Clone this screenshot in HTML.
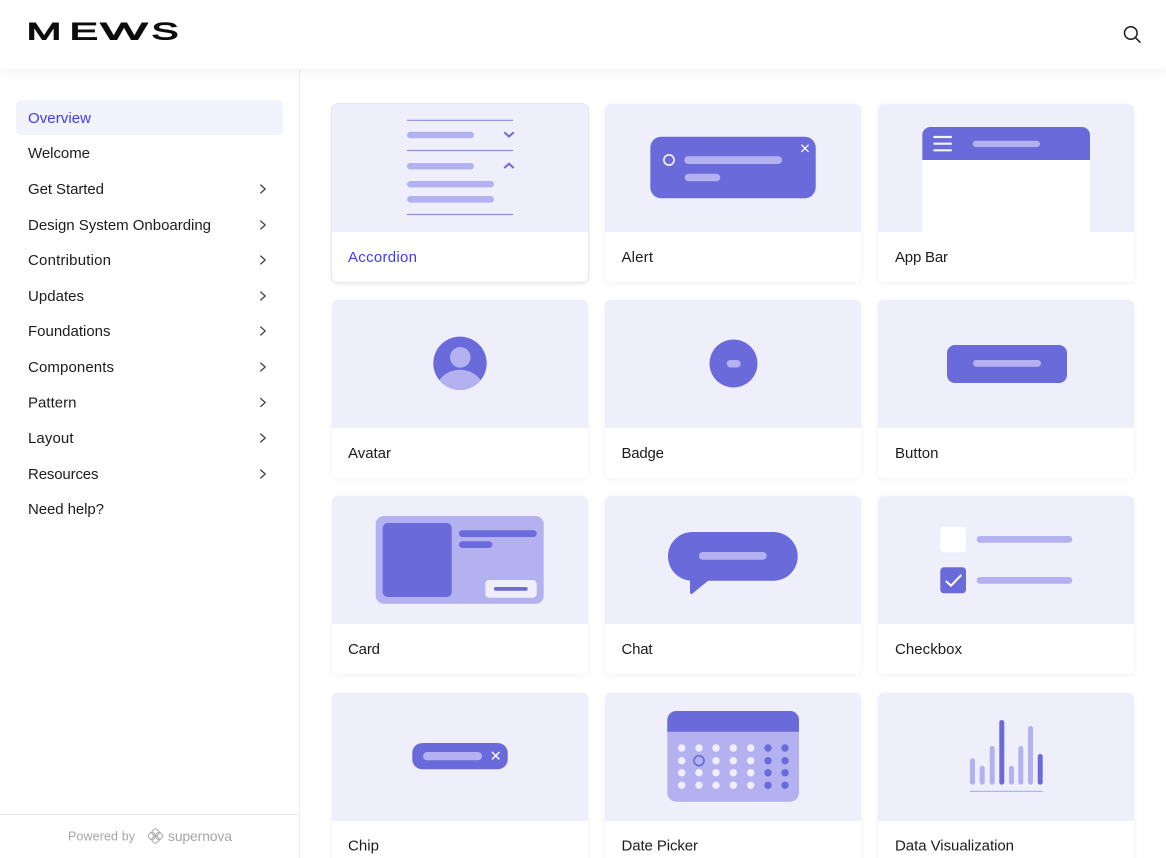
<!DOCTYPE html>
<html lang="en">
<head>
<meta charset="utf-8">
<title>Components</title>
<style>
html,body{margin:0;padding:0;background:#fff;width:1166px;height:858px;overflow:hidden}
body{position:relative;font-family:"Liberation Sans",sans-serif}
.hdr{position:absolute;left:0;top:0;width:1166px;height:69px;background:#fff;box-shadow:0 2px 12px rgba(0,0,0,.06);z-index:2}
.side{position:absolute;left:0;top:0;width:299px;height:858px;border-right:1px solid #ececec}
.active{position:absolute;left:16px;top:100px;width:267px;height:35px;border-radius:5px;background:#f3f3fd}
.foot{position:absolute;left:0;top:814px;width:299px;height:1px;background:#e8e8e8}
.card{position:absolute;width:255.700px;height:178px;border-radius:6px;background:#fff;overflow:hidden;box-shadow:0 1px 7px rgba(0,0,0,.06)}
.card i{display:block;height:128px;background:#efeffc}
.card.on{box-shadow:0 0 0 1px #e6e6e6,0 2px 6px rgba(0,0,0,.09)}
svg{position:absolute;left:0;top:0;z-index:3}
text{font-family:"Liberation Sans",sans-serif;font-size:15px;fill:#1c1c1c}
.l{font-size:24.500px;fill:#0c0c0c;stroke:#0c0c0c;stroke-width:1px}
.f{font-size:12.500px;fill:#a6a6a6}
</style>
</head>
<body>
<div class="side"><div class="active"></div><div class="foot"></div></div>
<div class="hdr"></div>

<div class="card on" style="left:332px;top:104px"><i></i></div>
<div class="card" style="left:605.300px;top:104px"><i></i></div>
<div class="card" style="left:878.300px;top:104px"><i></i></div>
<div class="card" style="left:332px;top:300px"><i></i></div>
<div class="card" style="left:605.300px;top:300px"><i></i></div>
<div class="card" style="left:878.300px;top:300px"><i></i></div>
<div class="card" style="left:332px;top:496px"><i></i></div>
<div class="card" style="left:605.300px;top:496px"><i></i></div>
<div class="card" style="left:878.300px;top:496px"><i></i></div>
<div class="card" style="left:332px;top:692.700px"><i></i></div>
<div class="card" style="left:605.300px;top:692.700px"><i></i></div>
<div class="card" style="left:878.300px;top:692.700px"><i></i></div>

<svg width="1166" height="858" viewBox="0 0 1166 858" xmlns="http://www.w3.org/2000/svg">
<defs><clipPath id="av"><circle cx="460" cy="363.300" r="26.700"/></clipPath></defs>

<!-- logo -->
<text class="l" x="26.500" y="39.500" textLength="35" lengthAdjust="spacingAndGlyphs">M</text>
<text class="l" x="69.500" y="39.500" textLength="28.500" lengthAdjust="spacingAndGlyphs">E</text>
<text class="l" x="100.500" y="39.500" textLength="47" lengthAdjust="spacingAndGlyphs">W</text>
<text class="l" x="151.500" y="39.500" textLength="27" lengthAdjust="spacingAndGlyphs">S</text>

<!-- search -->
<circle cx="1130.800" cy="33" r="6.300" fill="none" stroke="#1a1a1a" stroke-width="1.500"/>
<path d="M1135.400 37.600L1140 42.200" fill="none" stroke="#1a1a1a" stroke-width="1.500" stroke-linecap="round"/>

<!-- nav -->
<text x="28" y="123" textLength="63" style="fill:#3f3cf0">Overview</text>
<text x="28" y="158" textLength="62">Welcome</text>
<text x="28" y="194" textLength="76">Get Started</text>
<text x="28" y="230" textLength="183">Design System Onboarding</text>
<text x="28" y="265" textLength="83">Contribution</text>
<text x="28" y="301" textLength="56">Updates</text>
<text x="28" y="336" textLength="82.500">Foundations</text>
<text x="28" y="372" textLength="86">Components</text>
<text x="28" y="407.500" textLength="48.500">Pattern</text>
<text x="28" y="443" textLength="45.500">Layout</text>
<text x="28" y="479" textLength="70.500">Resources</text>
<text x="28" y="514" textLength="76">Need help?</text>

<g fill="none" stroke="#444" stroke-width="1.300" stroke-linecap="round" stroke-linejoin="round">
<path d="M260.700 185l4.500 4-4.500 4"/>
<path d="M260.700 221l4.500 4-4.500 4"/>
<path d="M260.700 256l4.500 4-4.500 4"/>
<path d="M260.700 292l4.500 4-4.500 4"/>
<path d="M260.700 327l4.500 4-4.500 4"/>
<path d="M260.700 363l4.500 4-4.500 4"/>
<path d="M260.700 398.500l4.500 4-4.500 4"/>
<path d="M260.700 434l4.500 4-4.500 4"/>
<path d="M260.700 470l4.500 4-4.500 4"/>
</g>

<!-- footer -->
<text class="f" x="68" y="840.500" textLength="67">Powered by</text>
<g fill="none" stroke="#a6a6a6" stroke-width="1">
<rect x="152.200" y="829.200" width="6.600" height="6.600" rx="2.200" transform="rotate(45 155.500 832.500)"/>
<rect x="152.200" y="836.200" width="6.600" height="6.600" rx="2.200" transform="rotate(45 155.500 839.500)"/>
<rect x="148.700" y="832.700" width="6.600" height="6.600" rx="2.200" transform="rotate(45 152 836)"/>
<rect x="155.700" y="832.700" width="6.600" height="6.600" rx="2.200" transform="rotate(45 159 836)"/>
</g>
<text class="f" x="168" y="841" textLength="64" style="font-size:14px">supernova</text>

<!-- accordion -->
<path d="M407 120.300H513M407 150.500H513M407 214.500H513" stroke="#8f8de4" stroke-width="1.200"/>
<g fill="#b3b1f0">
<rect x="407" y="131.700" width="67" height="6.600" rx="3.300"/>
<rect x="407" y="163" width="67" height="6.400" rx="3.200"/>
<rect x="407" y="181" width="87" height="6.400" rx="3.200"/>
<rect x="407" y="196" width="87" height="6.600" rx="3.300"/>
</g>
<g fill="none" stroke="#6a6ada" stroke-width="2">
<path d="M504.300 132.300l4.700 4.200 4.700-4.200"/>
<path d="M504.300 168l4.700-4.300 4.700 4.300"/>
</g>

<!-- alert -->
<rect x="650.300" y="136.700" width="165.400" height="61.600" rx="11" fill="#6a6ada"/>
<circle cx="669" cy="160" r="5.100" fill="none" stroke="#efeffc" stroke-width="1.700"/>
<rect x="684.300" y="156.300" width="97.700" height="7.700" rx="3.800" fill="#b3b1f0"/>
<rect x="684.700" y="173.700" width="35.600" height="7.600" rx="3.800" fill="#b3b1f0"/>
<path d="M801.400 144.700l7.200 7.200M808.600 144.700l-7.200 7.200" stroke="#fff" stroke-width="1.300" fill="none"/>

<!-- app bar -->
<path d="M922.300 232V160H1090V232Z" fill="#fff"/>
<path d="M922.300 160V135a8 8 0 0 1 8-8H1082a8 8 0 0 1 8 8V160Z" fill="#6a6ada"/>
<path d="M934.300 137H951M934.300 143.700H951M934.300 150.300H951" stroke="#f4f4ff" stroke-width="2.200" stroke-linecap="round"/>
<rect x="972.700" y="140.700" width="67.300" height="6.400" rx="3.200" fill="#b3b1f0"/>

<!-- avatar -->
<circle cx="460" cy="363.300" r="26.700" fill="#6a6ada"/>
<circle cx="460.300" cy="357.300" r="10.300" fill="#b3b1f0"/>
<circle cx="460" cy="395.700" r="26" fill="#b3b1f0" clip-path="url(#av)"/>

<!-- badge -->
<circle cx="733.500" cy="363.500" r="24" fill="#6a6ada"/>
<rect x="726.700" y="360" width="14" height="7.500" rx="3.700" fill="#b3b1f0"/>

<!-- button -->
<rect x="947" y="345" width="120" height="38" rx="8" fill="#6a6ada"/>
<rect x="973" y="360" width="68" height="6.700" rx="3.300" fill="#b3b1f0"/>

<!-- card -->
<rect x="375.700" y="516" width="168" height="87.700" rx="8" fill="#b3b1f0"/>
<rect x="382.700" y="523" width="69" height="74" rx="5" fill="#6a6ada"/>
<rect x="459" y="530.300" width="77.700" height="6.700" rx="3.300" fill="#6a6ada"/>
<rect x="459" y="541.300" width="33.300" height="6.700" rx="3.300" fill="#6a6ada"/>
<rect x="485.300" y="580" width="51.400" height="17.700" rx="4" fill="#efeffc"/>
<rect x="494" y="587" width="33.700" height="3.700" rx="1.800" fill="#6a6ada"/>

<!-- chat -->
<rect x="668" y="532" width="129.700" height="48.700" rx="24.300" fill="#6a6ada"/>
<path d="M690 578V592.500a1.500 1.500 0 0 0 2.500 1.100L708 580.700V578Z" fill="#6a6ada"/>
<rect x="699" y="552" width="67.700" height="7.700" rx="3.800" fill="#b3b1f0"/>

<!-- checkbox -->
<rect x="940.300" y="527" width="25.700" height="25.300" rx="3.500" fill="#fff"/>
<rect x="940.300" y="567.300" width="25.700" height="26" rx="3.500" fill="#6a6ada"/>
<path d="M945.900 581L951 585.700L961.300 575" fill="none" stroke="#fff" stroke-width="2"/>
<rect x="976.700" y="536" width="95.600" height="6.700" rx="3.300" fill="#b3b1f0"/>
<rect x="976.700" y="577" width="95.600" height="6.700" rx="3.300" fill="#b3b1f0"/>

<!-- chip -->
<rect x="412.300" y="743" width="95.400" height="26.300" rx="10" fill="#6a6ada"/>
<rect x="423" y="752" width="59" height="8.300" rx="4.100" fill="#b3b1f0"/>
<path d="M492 752l7.400 7.400M499.400 752l-7.400 7.400" stroke="#fff" stroke-width="1.400" fill="none"/>

<!-- date picker -->
<rect x="667.300" y="711" width="131.700" height="90.700" rx="9" fill="#b3b1f0"/>
<path d="M667.300 731.700V720a9 9 0 0 1 9-9H790a9 9 0 0 1 9 9V731.700Z" fill="#6a6ada"/>
<g fill="#efeffc">
<circle cx="681.700" cy="748" r="3.700"/><circle cx="699" cy="748" r="3.700"/><circle cx="716" cy="748" r="3.700"/><circle cx="733.300" cy="748" r="3.700"/><circle cx="750.700" cy="748" r="3.700"/>
<circle cx="681.700" cy="760.700" r="3.700"/><circle cx="716" cy="760.700" r="3.700"/><circle cx="733.300" cy="760.700" r="3.700"/><circle cx="750.700" cy="760.700" r="3.700"/>
<circle cx="681.700" cy="772.700" r="3.700"/><circle cx="699" cy="772.700" r="3.700"/><circle cx="716" cy="772.700" r="3.700"/><circle cx="733.300" cy="772.700" r="3.700"/><circle cx="750.700" cy="772.700" r="3.700"/>
<circle cx="681.700" cy="785.300" r="3.700"/><circle cx="699" cy="785.300" r="3.700"/><circle cx="716" cy="785.300" r="3.700"/><circle cx="733.300" cy="785.300" r="3.700"/><circle cx="750.700" cy="785.300" r="3.700"/>
</g>
<g fill="#6a6ada">
<circle cx="768" cy="748" r="3.700"/><circle cx="785" cy="748" r="3.700"/>
<circle cx="768" cy="760.700" r="3.700"/><circle cx="785" cy="760.700" r="3.700"/>
<circle cx="768" cy="772.700" r="3.700"/><circle cx="785" cy="772.700" r="3.700"/>
<circle cx="768" cy="785.300" r="3.700"/><circle cx="785" cy="785.300" r="3.700"/>
</g>
<circle cx="699" cy="760.700" r="5" fill="#b3b1f0" stroke="#6a6ada" stroke-width="1.700"/>

<!-- data viz -->
<g fill="#b3b1f0">
<rect x="970" y="758.300" width="5" height="26.400" rx="2.500"/>
<rect x="979.700" y="765.700" width="5" height="19" rx="2.500"/>
<rect x="989.700" y="746" width="5" height="38.700" rx="2.500"/>
<rect x="1009" y="765.700" width="5" height="19" rx="2.500"/>
<rect x="1018.300" y="746" width="5" height="38.700" rx="2.500"/>
<rect x="1028" y="726" width="5" height="58.700" rx="2.500"/>
</g>
<g fill="#6a6ada">
<rect x="999.300" y="720" width="5" height="64.700" rx="2.500"/>
<rect x="1037.700" y="754" width="5" height="30.700" rx="2.500"/>
</g>
<path d="M970 791.400H1042.700" stroke="#b3b1f0" stroke-width="1.200"/>

<!-- labels -->
<text x="348" y="262" textLength="69" style="fill:#3f3cf0">Accordion</text>
<text x="621.500" y="262" textLength="31.500">Alert</text>
<text x="895" y="262" textLength="53">App Bar</text>
<text x="348" y="458" textLength="43">Avatar</text>
<text x="621.500" y="458" textLength="42.500">Badge</text>
<text x="895" y="458" textLength="43.500">Button</text>
<text x="348" y="654" textLength="32">Card</text>
<text x="621.500" y="654" textLength="31">Chat</text>
<text x="895" y="654" textLength="67">Checkbox</text>
<text x="348" y="850.500" textLength="31">Chip</text>
<text x="621.500" y="850.500" textLength="76.500">Date Picker</text>
<text x="895" y="850.500" textLength="119">Data Visualization</text>
</svg>
</body>
</html>
